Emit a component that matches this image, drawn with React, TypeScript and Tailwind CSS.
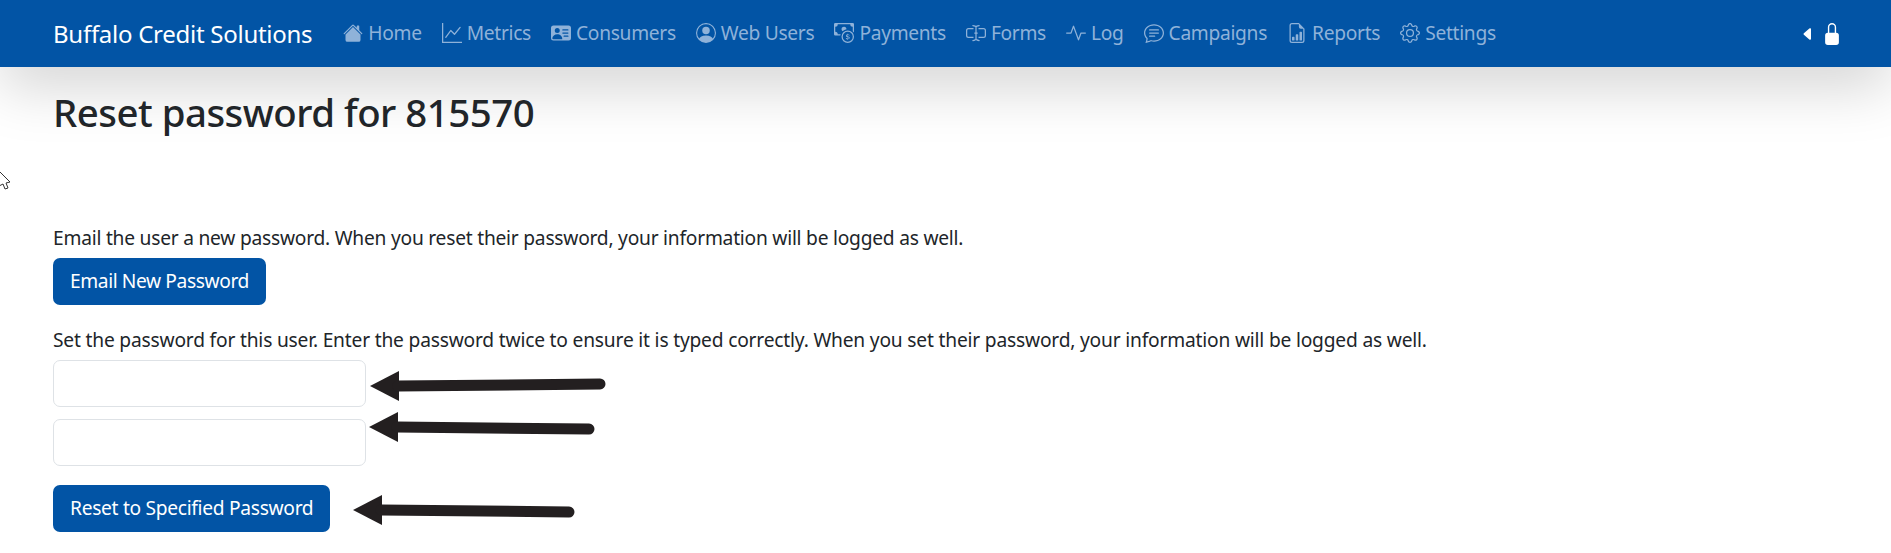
import { BsHouseFill, BsGraphUp, BsPersonVcardFill, BsPersonCircle, BsCashCoin, BsInputCursorText, BsActivity, BsChatText, BsFileEarmarkBarGraph, BsGear, BsCaretLeftFill, BsLockFill } from "react-icons/bs";

const nav = [
  { label: "Home", Icon: BsHouseFill },
  { label: "Metrics", Icon: BsGraphUp },
  { label: "Consumers", Icon: BsPersonVcardFill },
  { label: "Web Users", Icon: BsPersonCircle },
  { label: "Payments", Icon: BsCashCoin },
  { label: "Forms", Icon: BsInputCursorText },
  { label: "Log", Icon: BsActivity },
  { label: "Campaigns", Icon: BsChatText },
  { label: "Reports", Icon: BsFileEarmarkBarGraph },
  { label: "Settings", Icon: BsGear },
];

function Arrow({ className, x2, dy }: { className: string; x2: number; dy: number }) {
  return (
    <svg className={`absolute ${className}`} width={x2 + 8} height="34" viewBox={`0 0 ${x2 + 8} 34`} fill="#231f20">
      <path d="M0 17 L29 2 L29 32 Z" />
      <line x1="28" y1="17" x2={x2} y2={17 + dy} stroke="#231f20" strokeWidth="11" strokeLinecap="round" />
    </svg>
  );
}

export default function App() {
  return (
    <div className="relative min-h-[553px] overflow-hidden bg-white font-['Noto_Sans','Open_Sans',sans-serif] text-[#212529]">
      <nav className="flex h-[67px] items-center bg-[#0254a5] pl-[53px] pr-[48px] shadow-[0_19px_58px_rgba(0,0,0,0.175)]">
        <span className="mr-[31px] text-[24px] tracking-[-0.27px] text-white">Buffalo Credit Solutions</span>
        <ul className="flex items-center gap-[20px]">
          {nav.map(({ label, Icon }) => (
            <li key={label} className="flex items-center gap-[5px] text-[19.2px] tracking-[-0.3px] text-[#8fb2d9]">
              <Icon className="h-[20px] w-[20px]" />
              <span>{label}</span>
            </li>
          ))}
        </ul>
        <div className="ml-auto flex items-center gap-[5px] text-white">
          <BsCaretLeftFill className="h-[16px] w-[16px]" />
          <BsLockFill className="h-[22px] w-[22px]" />
        </div>
      </nav>

      <main className="px-[53px]">
        <h1 className="mt-[18px] text-[38.4px] font-medium leading-[54px] tracking-[-0.5px]">Reset password for 815570</h1>
        <p className="mt-[85px] text-[19.2px] leading-[27px] tracking-[-0.23px]">Email the user a new password. When you reset their password, your information will be logged as well.</p>
        <button className="mt-[7px] flex h-[47px] items-center rounded-[7px] bg-[#0254a5] px-[17px] text-[19.2px] tracking-[-0.4px] text-white">Email New Password</button>
        <p className="mt-[21px] text-[19.2px] leading-[27px] tracking-[-0.19px]">Set the password for this user. Enter the password twice to ensure it is typed correctly. When you set their password, your information will be logged as well.</p>
        <input type="password" aria-label="Password" className="mt-[7px] block h-[47px] w-[313px] rounded-[7px] border border-[#dee2e6] bg-white" />
        <input type="password" aria-label="Confirm password" className="mt-[12px] block h-[47px] w-[313px] rounded-[7px] border border-[#dee2e6] bg-white" />
        <button className="mt-[19px] flex h-[47px] items-center rounded-[7px] bg-[#0254a5] px-[17px] text-[19.2px] tracking-[-0.3px] text-white">Reset to Specified Password</button>
      </main>

      <Arrow className="left-[370px] top-[369px]" x2={230} dy={-2} />
      <Arrow className="left-[369px] top-[410px]" x2={220} dy={2} />
      <Arrow className="left-[353px] top-[493px]" x2={216} dy={2} />

      <svg className="absolute left-0 top-[171px]" width="12" height="20" viewBox="0 0 12 20" fill="white" stroke="#333" strokeWidth="1">
        <path d="M-1 0 L10 11 L6 12 L8 17 L5 18 L3 13 L-1 15 Z" />
      </svg>
    </div>
  );
}
